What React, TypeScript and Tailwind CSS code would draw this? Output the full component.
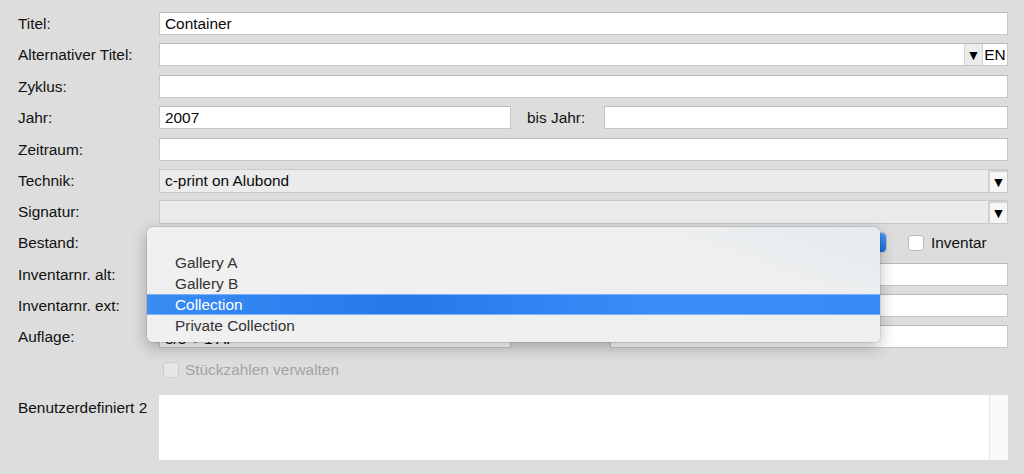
import React from "react";

const font = { fontFamily: '"Liberation Sans", Arial, sans-serif' };

function Label({ children }: { children: React.ReactNode }) {
  return (
    <div className="w-[141px] shrink-0 text-[15.4px] leading-none text-[#111] whitespace-nowrap pt-[1px]">
      {children}
    </div>
  );
}

function Field({ value, className = "" }: { value?: string; className?: string }) {
  return (
    <div
      className={
        "h-[23px] bg-white border border-[#c7c7c7] border-t-[#bababa] flex items-center pl-[5px] text-[15.4px] text-[#0a0a0a] whitespace-nowrap overflow-hidden " +
        className
      }
    >
      {value}
    </div>
  );
}

function Arrow() {
  return <span className="text-[14px] leading-none text-black">▼</span>;
}

export default function App() {
  return (
    <div
      className="relative w-[1024px] h-[474px] bg-[#dddddd] overflow-hidden"
      style={font}
    >
      <div className="flex flex-col pl-[18px] pr-[16px] pt-[12px]">
        {/* Titel */}
        <div className="flex items-center h-[23px]">
          <Label>Titel:</Label>
          <Field value="Container" className="flex-1" />
        </div>
        {/* Alternativer Titel */}
        <div className="flex items-center h-[23px] mt-[8px]">
          <Label>Alternativer Titel:</Label>
          <div className="flex-1 h-[23px] bg-white border border-[#c7c7c7] border-t-[#bababa] flex">
            <div className="flex-1" />
            <div className="w-[18px] h-full bg-[#ececec] border-l border-[#d4d4d4] flex items-center justify-center">
              <Arrow />
            </div>
            <div className="w-[25px] h-full bg-white border-l border-[#d4d4d4] flex items-center justify-center text-[15.4px] text-black">
              EN
            </div>
          </div>
        </div>
        {/* Zyklus */}
        <div className="flex items-center h-[23px] mt-[9px]">
          <Label>Zyklus:</Label>
          <Field className="flex-1" />
        </div>
        {/* Jahr */}
        <div className="flex items-center h-[23px] mt-[8px]">
          <Label>Jahr:</Label>
          <Field value="2007" className="w-[352px]" />
          <div className="w-[93px] pl-[16px] text-[15.4px] text-[#111] whitespace-nowrap">bis Jahr:</div>
          <Field className="flex-1" />
        </div>
        {/* Zeitraum */}
        <div className="flex items-center h-[23px] mt-[9px]">
          <Label>Zeitraum:</Label>
          <Field className="flex-1" />
        </div>
        {/* Technik */}
        <div className="flex items-center h-[23px] mt-[8px]">
          <Label>Technik:</Label>
          <div className="flex-1 h-[24px] bg-[#ebebeb] border border-[#c9c9c9] flex items-center">
            <div className="flex-1 pl-[5px] text-[15.4px] text-[#0a0a0a]">c-print on Alubond</div>
            <div className="w-[19px] h-full bg-[#f6f6f6] border-l-2 border-t-2 border-[#d2d2d2] flex items-center justify-center">
              <Arrow />
            </div>
          </div>
        </div>
        {/* Signatur */}
        <div className="flex items-center h-[23px] mt-[8px]">
          <Label>Signatur:</Label>
          <div className="flex-1 h-[24px] bg-[#ebebeb] border border-[#c9c9c9] flex items-center">
            <div className="flex-1" />
            <div className="w-[19px] h-full bg-[#f6f6f6] border-l-2 border-t-2 border-[#d2d2d2] flex items-center justify-center">
              <Arrow />
            </div>
          </div>
        </div>
        {/* Bestand */}
        <div className="flex items-center h-[23px] mt-[8px]">
          <Label>Bestand:</Label>
          <div className="w-[728px] h-[21px] bg-white rounded-[4px] border border-[#c4c4c4] flex">
            <div className="flex-1" />
            <div className="w-[20px] h-full rounded-r-[4px] bg-[linear-gradient(180deg,#4a9bf8,#1c6fe2)]" />
          </div>
          <div className="ml-[21px] w-[16px] h-[16px] rounded-[3px] bg-white border border-[#b9b9b9]" />
          <div className="ml-[7px] text-[15.4px] text-[#111]">Inventar</div>
        </div>
        {/* Inventarnr. alt */}
        <div className="flex items-center h-[23px] mt-[9px]">
          <Label>Inventarnr. alt:</Label>
          <Field className="flex-1" />
        </div>
        {/* Inventarnr. ext */}
        <div className="flex items-center h-[23px] mt-[8px]">
          <Label>Inventarnr. ext:</Label>
          <Field className="flex-1" />
        </div>
        {/* Auflage */}
        <div className="flex items-center h-[23px] mt-[8px]">
          <Label>Auflage:</Label>
          <div className="w-[352px] h-[23px] bg-white border border-[#c7c7c7] border-t-[#bababa] pl-[5px] pt-[5px] text-[15.4px] leading-none text-[#0a0a0a] whitespace-nowrap overflow-hidden">
            3/3 + 1 AP
          </div>
          <div className="w-[99px]" />
          <Field className="flex-1" />
        </div>
        {/* Stückzahlen */}
        <div className="flex items-center h-[18px] mt-[13px]">
          <div className="w-[141px] shrink-0" />
          <div className="ml-[4px] w-[16px] h-[16px] rounded-[3px] bg-[#e6e6e6] border border-[#cdcdcd]" />
          <div className="ml-[6px] text-[15.4px] text-[#a3a3a3] whitespace-nowrap">Stückzahlen verwalten</div>
        </div>
        {/* Benutzerdefiniert 2 */}
        <div className="flex items-start mt-[16px]">
          <div className="w-[141px] shrink-0 pt-[5px] text-[15.4px] leading-none text-[#111]">Benutzerdefiniert 2</div>
          <div className="flex-1 h-[65px] bg-white flex">
            <div className="flex-1" />
            <div className="w-[19px] h-full bg-[#fafafa] border-l border-[#e6e6e6]" />
          </div>
        </div>
      </div>

      {/* Popup menu */}
      <div className="absolute left-[147px] top-[227px] w-[733px] h-[115px] rounded-[6px] bg-[linear-gradient(200deg,#e5ebee_0%,#eeeff0_25%,#f0f0f0_100%)] shadow-[0_5px_16px_rgba(0,0,0,0.28),0_0_0_1px_rgba(0,0,0,0.07)] pt-[4px] text-[15.4px]">
        <div className="h-[21px]" />
        <div className="h-[21px] flex items-center pl-[28px] text-[#333]">Gallery A</div>
        <div className="h-[21px] flex items-center pl-[28px] text-[#333]">Gallery B</div>
        <div className="h-[21px] flex items-center pl-[28px] text-white border-y border-[#7fb2f5] bg-[linear-gradient(90deg,#3a8cf4_0%,#2578ea_35%,#3b8ef8_70%,#378bf7_100%)]">
          Collection
        </div>
        <div className="h-[21px] flex items-center pl-[28px] text-[#333]">Private Collection</div>
      </div>
    </div>
  );
}
